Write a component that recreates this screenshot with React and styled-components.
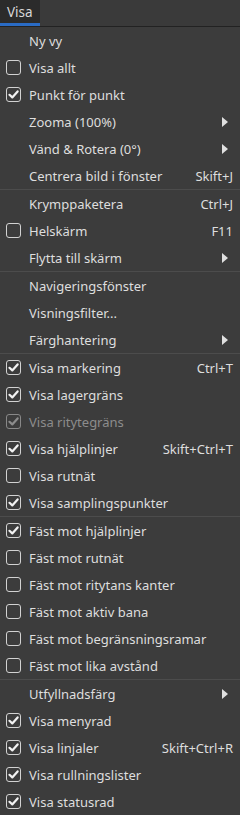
import React from 'react'
import styled, { createGlobalStyle } from 'styled-components'

const GlobalStyle = createGlobalStyle`
  html, body {
    margin: 0;
    padding: 0;
    background: #3c3c3c;
    font-family: 'Noto Sans', 'Open Sans', sans-serif;
  }
`

const Page = styled.div`
  width: 240px;
  height: 815px;
  overflow: hidden;
  background: #3c3c3c;
  color: #dedede;
  font-size: 13px;
`

const MenuBar = styled.div`
  display: flex;
  height: 26px;
  background: #3a3a3a;
  border-bottom: 1px solid #222;
`

const MenuTitle = styled.div`
  width: 40px;
  box-sizing: border-box;
  padding: 3px 0 0 7px;
  background: #2b2b2b;
  border-bottom: 3px solid #2a6bc4;
  color: #d8d8d8;
  font-size: 13.5px;
`

const MenuList = styled.div`
  display: flex;
  flex-direction: column;
`

const Row = styled.div`
  display: flex;
  align-items: center;
  height: 27px;
  padding-right: 7px;
  color: ${({ disabled }) => (disabled ? '#8c8c8c' : '#dedede')};
  white-space: nowrap;
`

const IconCell = styled.div`
  width: 29px;
  flex: none;
  display: flex;
  align-items: center;
  padding-left: 6px;
  box-sizing: border-box;
`

const Label = styled.div`
  flex: 1;
`

const Shortcut = styled.div`
  flex: none;
`

const Arrow = styled.div`
  width: 0;
  height: 0;
  margin-right: 5px;
  border-top: 5px solid transparent;
  border-bottom: 5px solid transparent;
  border-left: 6px solid #e0e0e0;
`

const Separator = styled.div`
  height: 1px;
  background: #4c4c4c;
`

const Box = styled.span`
  width: 13px;
  height: 13px;
  border: 1.3px solid ${({ disabled }) => (disabled ? '#888' : '#d2d2d2')};
  border-radius: 3px;
  display: flex;
  align-items: center;
  justify-content: center;
`

const Check = ({ checked, disabled }) => (
  <Box disabled={disabled}>
    {checked && (
      <svg width="11" height="11" viewBox="0 0 11 11">
        <path
          d="M1.5 5.8 L4.3 8.4 L9.6 2.4"
          fill="none"
          stroke={disabled ? '#8c8c8c' : '#f2f2f2'}
          strokeWidth="2.2"
          strokeLinecap="round"
          strokeLinejoin="round"
        />
      </svg>
    )}
  </Box>
)

const items = [
  { label: 'Ny vy' },
  { label: 'Visa allt', check: false },
  { label: 'Punkt för punkt', check: true },
  { label: 'Zooma (100%)', sub: true },
  { label: 'Vänd & Rotera (0°)', sub: true },
  { label: 'Centrera bild i fönster', key: 'Skift+J' },
  'sep',
  { label: 'Krymppaketera', key: 'Ctrl+J' },
  { label: 'Helskärm', check: false, key: 'F11' },
  { label: 'Flytta till skärm', sub: true },
  'sep',
  { label: 'Navigeringsfönster' },
  { label: 'Visningsfilter...' },
  { label: 'Färghantering', sub: true },
  'sep',
  { label: 'Visa markering', check: true, key: 'Ctrl+T' },
  { label: 'Visa lagergräns', check: true },
  { label: 'Visa ritytegräns', check: true, disabled: true },
  { label: 'Visa hjälplinjer', check: true, key: 'Skift+Ctrl+T' },
  { label: 'Visa rutnät', check: false },
  { label: 'Visa samplingspunkter', check: true },
  'sep',
  { label: 'Fäst mot hjälplinjer', check: true },
  { label: 'Fäst mot rutnät', check: false },
  { label: 'Fäst mot ritytans kanter', check: false },
  { label: 'Fäst mot aktiv bana', check: false },
  { label: 'Fäst mot begränsningsramar', check: false },
  { label: 'Fäst mot lika avstånd', check: false },
  'sep',
  { label: 'Utfyllnadsfärg', sub: true },
  { label: 'Visa menyrad', check: true },
  { label: 'Visa linjaler', check: true, key: 'Skift+Ctrl+R' },
  { label: 'Visa rullningslister', check: true },
  { label: 'Visa statusrad', check: true },
]

export default function App() {
  return (
    <Page>
      <GlobalStyle />
      <MenuBar>
        <MenuTitle>Visa</MenuTitle>
      </MenuBar>
      <MenuList>
        {items.map((it, i) =>
          it === 'sep' ? (
            <Separator key={i} />
          ) : (
            <Row key={i} disabled={it.disabled}>
              <IconCell>
                {it.check !== undefined && (
                  <Check checked={it.check} disabled={it.disabled} />
                )}
              </IconCell>
              <Label>{it.label}</Label>
              {it.key && <Shortcut>{it.key}</Shortcut>}
              {it.sub && <Arrow />}
            </Row>
          )
        )}
      </MenuList>
    </Page>
  )
}
